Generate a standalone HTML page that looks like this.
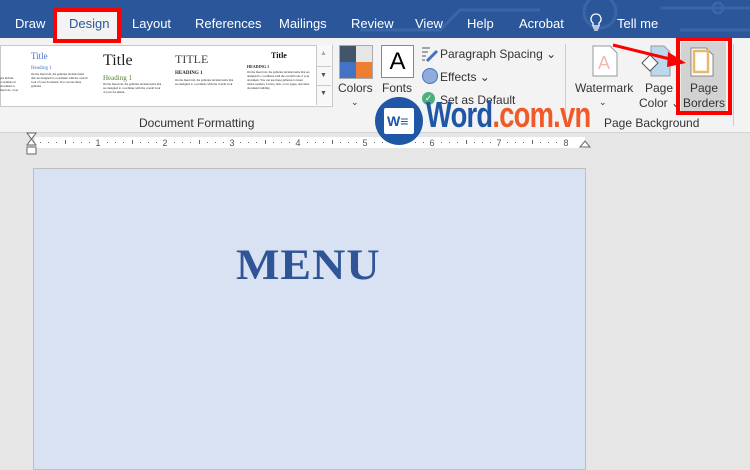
<!DOCTYPE html><html><head><style>
body{margin:0;width:750px;height:464px;overflow:hidden;background:#e6e6e6;font-family:"Liberation Sans",sans-serif;position:relative}
.a{position:absolute}
.tab{position:absolute;top:16px;color:#fff;font-size:13px}
.sm{font-size:3px;line-height:4px;color:#222;position:absolute;font-family:"Liberation Serif",serif}
.lbl{position:absolute;font-size:12px;color:#333}
</style></head><body>
<div class="a" style="left:0;top:0;width:750px;height:38px;background:#2b579a"></div>
<svg class="a" style="left:280px;top:0" width="470" height="38"><g fill="none" stroke="#3a66a8" stroke-width="3"><circle cx="320" cy="12" r="16"/><path d="M80 30 H160 L180 10 H260"/><path d="M380 8 H470 M400 30 H470"/><circle cx="438" cy="8" r="5"/></g></svg>
<div class="a" style="left:0;top:38px;width:750px;height:94px;background:#f3f3f3;border-bottom:1px solid #d4d4d4"></div>
<div class="tab" style="left:15px">Draw</div>
<div class="a" style="left:57px;top:12px;width:60px;height:28px;background:#f3f3f3"></div>
<div class="tab" style="left:69px;color:#2b579a">Design</div>
<div class="a" style="left:53px;top:8px;width:68px;height:35px;border:4px solid #f00;box-sizing:border-box"></div>
<div class="tab" style="left:132px">Layout</div>
<div class="tab" style="left:195px">References</div>
<div class="tab" style="left:279px">Mailings</div>
<div class="tab" style="left:351px">Review</div>
<div class="tab" style="left:415px">View</div>
<div class="tab" style="left:467px">Help</div>
<div class="tab" style="left:519px">Acrobat</div>
<div class="tab" style="left:617px">Tell me</div>
<svg class="a" style="left:589px;top:13px" width="14" height="20"><path d="M7 1a5 5 0 0 0-3 9v3h6v-3a5 5 0 0 0-3-9zM4 15h6M5 17h4" fill="none" stroke="#fff" stroke-width="1.3"/></svg>
<!-- gallery -->
<div class="a" style="left:0;top:45px;width:331px;height:60px;background:#fff;border:1px solid #c8c8c8"></div>
<div class="a" style="left:316px;top:45px;width:15px;height:60px;border-left:1px solid #c8c8c8;background:#f8f8f8"></div>
<div class="a" style="left:317px;top:66px;width:14px;border-top:1px solid #c8c8c8"></div>
<div class="a" style="left:317px;top:85px;width:14px;border-top:1px solid #c8c8c8"></div>
<div class="a" style="left:320px;top:50px;font-size:7px;color:#aaa">▲</div>
<div class="a" style="left:320px;top:72px;font-size:7px;color:#555">▼</div>
<div class="a" style="left:320px;top:90px;font-size:7px;color:#555">▼</div>
<div class="a" style="left:31px;top:51px;font:9px 'Liberation Serif';color:#4472c4">Title</div>
<div class="a" style="left:31px;top:66px;font:5px 'Liberation Serif';color:#4472c4">Heading 1</div>
<div class="sm" style="left:31px;top:72px;width:58px">On the Insert tab, the galleries include items that are designed to coordinate with the overall look of your document. You can use these galleries</div>
<div class="sm" style="left:0;top:76px;width:22px">pes include coordinate ur document to insert ds, cover</div>
<div class="a" style="left:103px;top:52px;font:16px 'Liberation Serif';color:#222">Title</div>
<div class="a" style="left:103px;top:74px;font:7px 'Liberation Serif';color:#548235">Heading 1</div>
<div class="sm" style="left:103px;top:82px;width:60px">On the Insert tab, the galleries include items that are designed to coordinate with the overall look of your document.</div>
<div class="a" style="left:175px;top:52px;font:12px 'Liberation Serif';color:#444">TITLE</div>
<div class="a" style="left:175px;top:71px;font:bold 5px 'Liberation Serif';color:#222">HEADING 1</div>
<div class="sm" style="left:175px;top:78px;width:62px">On the Insert tab, the galleries include items that are designed to coordinate with the overall look</div>
<div class="a" style="left:271px;top:51px;font:bold 8px 'Liberation Serif';color:#111">Title</div>
<div class="a" style="left:247px;top:64px;font:bold 4px 'Liberation Serif';color:#222">HEADING 1</div>
<div class="sm" style="left:247px;top:70px;width:64px">On the Insert tab, the galleries include items that are designed to coordinate with the overall look of your document. You can use these galleries to insert tables, headers, footers, lists, cover pages, and other document building</div>
<div class="lbl" style="left:139px;top:116px">Document Formatting</div>
<!-- colors/fonts -->
<div class="a" style="left:339px;top:45px;width:32px;height:32px;border:1px solid #aaa;display:grid;grid-template-columns:1fr 1fr">
<div style="background:#44546a"></div><div style="background:#e7e6e6"></div><div style="background:#4472c4"></div><div style="background:#ed7d31"></div></div>
<div class="lbl" style="left:338px;top:81px">Colors</div><div class="lbl" style="left:351px;top:97px;font-size:9px">⌄</div>
<div class="a" style="left:381px;top:45px;width:31px;height:31px;border:1px solid #888;background:#fff;font-size:24px;text-align:center;line-height:31px">A</div>
<div class="lbl" style="left:382px;top:81px">Fonts</div>
<div class="lbl" style="left:440px;top:47px">Paragraph Spacing ⌄</div>
<svg class="a" style="left:421px;top:45px" width="18" height="18"><path d="M1 3h8M1 7h6M1 11h4M1 15h3" stroke="#555"/><path d="M6 16l10-10" stroke="#4472c4" stroke-width="3"/></svg>
<div class="a" style="left:422px;top:68px;width:14px;height:14px;border-radius:50%;background:#8faadc;border:1px solid #4472c4"></div>
<div class="lbl" style="left:440px;top:70px">Effects ⌄</div>
<div class="a" style="left:422px;top:92px;width:13px;height:13px;border-radius:50%;background:#4caf7d;color:#fff;font-size:9px;text-align:center;line-height:13px">✓</div>
<div class="lbl" style="left:440px;top:93px">Set as Default</div>
<div class="a" style="left:565px;top:44px;height:82px;border-left:1px solid #ccc"></div>
<!-- page background -->
<svg class="a" style="left:592px;top:45px" width="26" height="32"><path d="M1 1h17l7 7v23H1z" fill="#fff" stroke="#999"/><text x="6" y="24" font-size="18" fill="#f4b6b0" font-family="Liberation Sans">A</text></svg>
<div class="lbl" style="left:575px;top:81px">Watermark</div><div class="lbl" style="left:599px;top:97px;font-size:9px">⌄</div>
<svg class="a" style="left:641px;top:45px" width="30" height="32"><path d="M10 1h13l6 6v24H10z" fill="#bdd7ee" stroke="#999"/><path d="M1 18l8-8 8 8-8 8z" fill="#fff" stroke="#555"/></svg>
<div class="lbl" style="left:645px;top:81px">Page</div><div class="lbl" style="left:639px;top:96px">Color ⌄</div>
<div class="a" style="left:681px;top:42px;width:45px;height:70px;background:#d2d2d2"></div>
<svg class="a" style="left:690px;top:47px" width="24" height="30"><path d="M1 1h15l7 7v21H1z" fill="#fff" stroke="#888"/><rect x="4" y="4" width="14" height="21" fill="none" stroke="#e8b86d" stroke-width="2.5"/></svg>
<div class="lbl" style="left:690px;top:81px">Page</div><div class="lbl" style="left:683px;top:96px">Borders</div>
<div class="a" style="left:676px;top:37px;width:56px;height:78px;border:4px solid #f00;box-sizing:border-box"></div>
<svg class="a" style="left:610px;top:40px" width="80" height="30"><path d="M3 5L64 20" stroke="#f00" stroke-width="3"/><path d="M58 12L76 23 57 27z" fill="#f00"/></svg>
<div class="lbl" style="left:604px;top:116px">Page Background</div>
<div class="a" style="left:733px;top:44px;height:82px;border-left:1px solid #ccc"></div>
<!-- ruler -->
<svg class="a" style="left:0;top:132px" width="750" height="30">
<rect x="35" y="5" width="550" height="11" fill="#fff"/>
<g fill="#555" font-size="9" font-family="Liberation Sans" text-anchor="middle">
<text x="98" y="14">1</text><text x="165" y="14">2</text><text x="232" y="14">3</text><text x="298" y="14">4</text><text x="365" y="14">5</text><text x="432" y="14">6</text><text x="499" y="14">7</text><text x="566" y="14">8</text>
</g>
<g stroke="#666" stroke-width="1">
<path id="t" d="M40.5 10v1M48.5 10v1M56.5 10v1M65.5 8v4M73.5 10v1M81.5 10v1M89.5 10v1"/>
<use href="#t" x="67"/><use href="#t" x="134"/><use href="#t" x="200"/><use href="#t" x="267"/><use href="#t" x="334"/><use href="#t" x="401"/><use href="#t" x="467"/>
</g>
<path d="M27 1h9L31.5 7zM27 13h9L31.5 7zM27 15h9v7h-9z" fill="#fff" stroke="#666"/>
<path d="M580 15L585 9 590 15z" fill="#fff" stroke="#666"/>
</svg>
<!-- page -->
<div class="a" style="left:33px;top:168px;width:551px;height:300px;background:#d9e2f3;border:1px solid #bfbfbf"></div>
<div class="a" style="left:236px;top:238px;font:bold 46px 'Liberation Serif',serif;color:#2f5597;letter-spacing:1px;transform:scaleY(0.95)">MENU</div>
<!-- watermark logo -->
<div class="a" style="left:375px;top:97px;width:48px;height:48px;border-radius:50%;background:#1f56a6"></div>
<div class="a" style="left:384px;top:108px;width:30px;height:26px;background:#fff;border-radius:2px;font:bold 14px 'Liberation Sans';color:#1f56a6;line-height:26px;padding-left:3px;box-sizing:border-box">W≡</div>
<div class="a" style="left:426px;top:94px;font:bold 36px 'Liberation Sans';color:#1f56a6;letter-spacing:-1px;transform:scaleX(0.76);transform-origin:0 0;white-space:nowrap">Word<span style="color:#f05a28">.com.vn</span></div>
</body></html>
